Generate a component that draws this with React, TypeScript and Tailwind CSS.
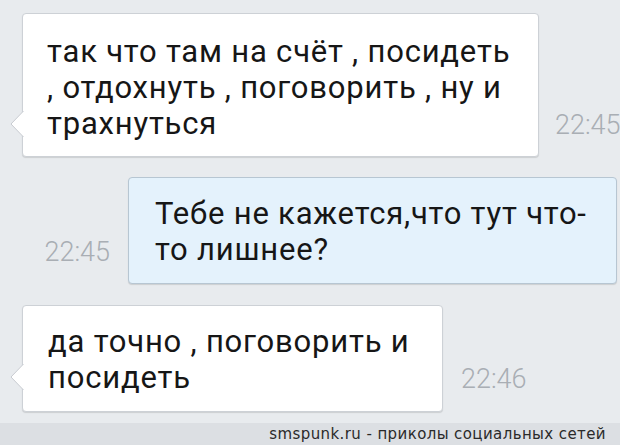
import React from "react";

const Tail = ({ bottom }: { bottom: number }) => (
  <svg
    className="absolute -left-[13px]"
    style={{ bottom }}
    width="14"
    height="26"
    viewBox="0 0 14 26"
  >
    <path d="M13.5 0 L1 13 L13.5 26" fill="#ffffff" stroke="#c8ccd1" strokeWidth="1" />
  </svg>
);

const Time = ({ children }: { children: React.ReactNode }) => (
  <span className="text-[27px] font-light leading-none text-[#a9aeb4] whitespace-nowrap">{children}</span>
);

const App = () => {
  return (
    <div
      className="w-[620px] h-[445px] overflow-hidden bg-[#e8ebee] flex flex-col text-[#161616]"
      style={{ fontFamily: "Roboto, 'Noto Sans', sans-serif" }}
    >
      {/* incoming */}
      <div className="flex items-end gap-[16px] pl-[22px] mt-[13px] whitespace-nowrap">
        <div className="relative shrink-0 w-[517px] h-[144px] bg-white border border-[#cdd1d6] rounded-[4px] shadow-[0_1px_1px_rgba(0,0,0,0.12)] pl-[24px] pt-[20px] text-[31px] leading-[36px] tracking-[0.8px]">
          так что там на счёт , посидеть
          <br />, отдохнуть , поговорить , ну и
          <br />трахнуться
          <Tail bottom={19} />
        </div>
        <div className="pb-[16px] shrink-0">
          <Time>22:45</Time>
        </div>
      </div>

      {/* outgoing */}
      <div className="flex items-end justify-end gap-[18px] pr-[3px] mt-[20px] whitespace-nowrap">
        <div className="pb-[16px]">
          <Time>22:45</Time>
        </div>
        <div className="shrink-0 w-[489px] h-[107px] bg-[#e4f2fc] border border-[#b7c6d2] rounded-[4px] shadow-[0_1px_1px_rgba(0,0,0,0.12)] pl-[26px] pt-[18px] text-[31px] leading-[36px] tracking-[0.8px]">
          Тебе не кажется,что тут что-
          <br />то лишнее?
        </div>
      </div>

      {/* incoming */}
      <div className="flex items-end gap-[18px] pl-[22px] mt-[21px] whitespace-nowrap">
        <div className="relative shrink-0 w-[421px] h-[107px] bg-white border border-[#cdd1d6] rounded-[4px] shadow-[0_1px_1px_rgba(0,0,0,0.12)] pl-[25px] pt-[18px] text-[31px] leading-[36px] tracking-[0.8px]">
          да точно , поговорить и
          <br />посидеть
          <Tail bottom={21} />
        </div>
        <div className="pb-[17px]">
          <Time>22:46</Time>
        </div>
      </div>

      <div className="mt-auto h-[22px] bg-[#dcdfe3] flex items-center justify-end pr-[14px]">
        <span
          className="text-[15px] leading-none text-[#2a2a2a] tracking-[0.4px]"
          style={{ fontFamily: "'DejaVu Sans', sans-serif" }}
        >
          smspunk.ru - приколы социальных сетей
        </span>
      </div>
    </div>
  );
};

export default App;
